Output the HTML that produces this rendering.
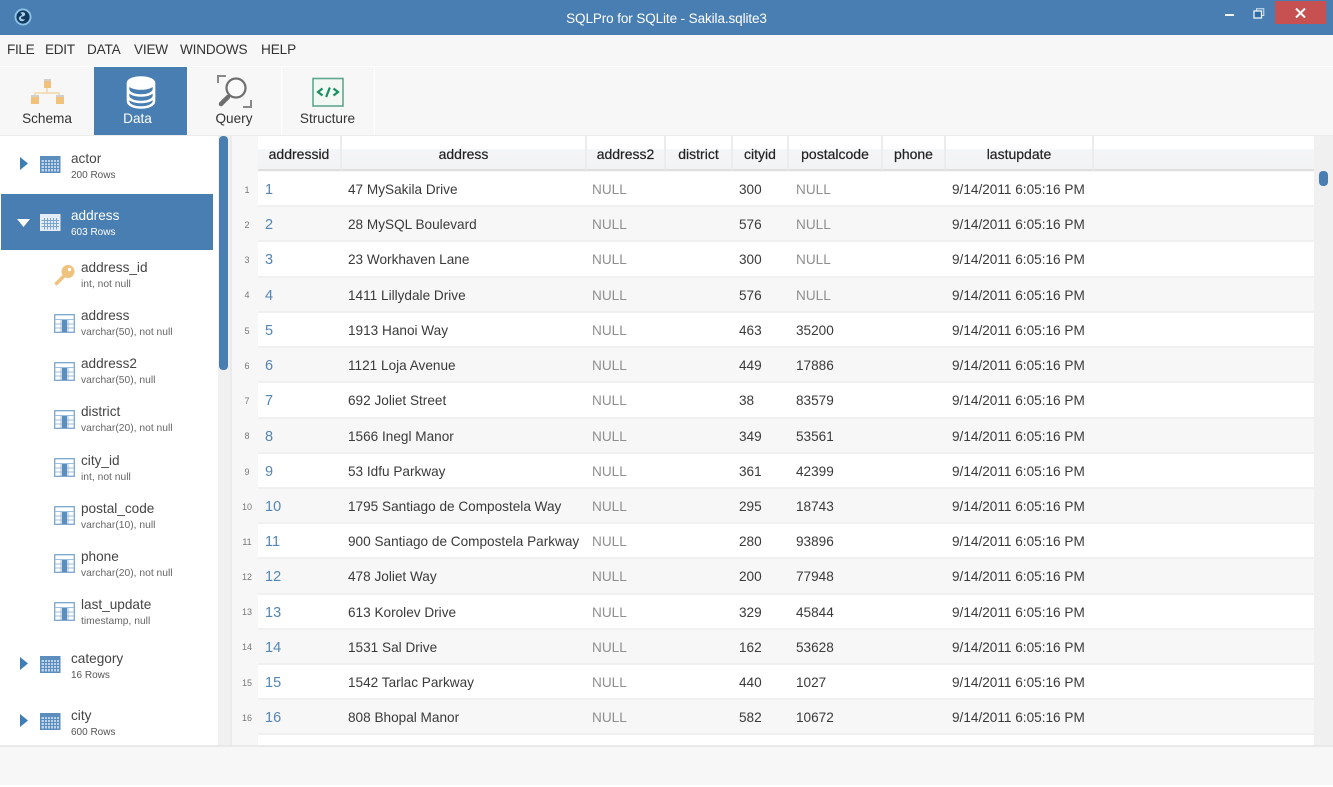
<!DOCTYPE html>
<html><head><meta charset="utf-8"><style>
html,body{margin:0;padding:0;width:1333px;height:787px;overflow:hidden;background:#f7f7f7;font-family:"Liberation Sans",sans-serif;color:#333}
div,span,svg{position:absolute;white-space:nowrap}
.row{left:258px;width:1056px;height:35px;box-sizing:border-box;border-bottom:2px solid #f0f0f0}
.row.o{background:#fff}.row.e{background:#f7f7f7}
.row span{top:9px;font-size:13.6px;line-height:18px;color:#3a3a3a}
.row .c1{left:7px;top:9px;color:#5286b8;font-size:14.5px}
.c2{left:90px}.row .c3{left:334px;color:#8f8f8f}.c5{left:481px}.c6{left:538px}.row .c6n{left:538px;color:#8f8f8f}.c8{left:694px}
.n{left:232px;width:30px;text-align:center;font-size:9px;line-height:12px;color:#777}
.h{top:136px;height:35px;background:linear-gradient(#fff 0,#fff 39%,#f4f5f7 41%,#f2f3f5 100%);border-right:2px solid #ececec;border-bottom:2px solid #dfdfdf;box-sizing:border-box;text-align:center;font-size:14px;line-height:37px;color:#222;-webkit-text-stroke:.2px #222}
.tb{left:40px;width:21px;height:17px}
.cn{left:71px;font-size:13.6px;line-height:16px;color:#444}
.cs{left:71px;font-size:10px;line-height:12px;color:#555}
.fn{left:81px;font-size:13.6px;line-height:16px;color:#444}
.fs{left:81px;font-size:10.3px;line-height:12px;color:#666}
.fi{left:54px;width:21px;height:19px}
.m{top:41px;font-size:13.6px;line-height:18px;color:#333}
.l{top:110px;font-size:13.6px;line-height:18px;color:#333;text-align:center}
</style></head><body>
<svg width="0" height="0" style="left:0;top:0"><defs>
<g id="tbl"><rect x="0" y="0" width="20.5" height="17" fill="#5b8dbd"/><rect x="1.5" y="4" width="17.5" height="11.5" fill="#bcd3e9"/><path d="M1.5 6.5H19M1.5 9.5H19M1.5 12.5H19M4.5 4V15.5M7.5 4V15.5M10.5 4V15.5M13.5 4V15.5M16.5 4V15.5" stroke="#5b8dbd" stroke-width="1" fill="none"/></g>
<g id="fld"><rect x="0.7" y="0.7" width="19.6" height="17.6" fill="#fff" stroke="#7ba6cf" stroke-width="1.3"/><path d="M1 5.5H20M1 10H8M13 10H20M1 14H8M13 14H20M7 5V18M14 5V18" stroke="#9dbedc" stroke-width="1" fill="none"/><rect x="8" y="6" width="5" height="12" fill="#5b8dbd"/></g>
</defs></svg>

<div style="left:0;top:0;width:1333px;height:35px;background:#497eb2"></div>
<svg style="left:14px;top:8px" width="18" height="18" viewBox="0 0 18 18"><circle cx="9" cy="9" r="8.5" fill="#8ec4e8"/><circle cx="9" cy="9" r="6.6" fill="#123a5e"/><path d="M6 5c3-2 6 0 5 2-1 2-4 1-4 3 0 1 2 2 4 1-1 3-5 3-6 0-1-2 2-3 3-4 0-1-1-2-2-2z" fill="#a9cfea"/></svg>
<div style="left:0;width:1333px;top:10px;text-align:center;font-size:13.5px;line-height:18px;color:#fff;letter-spacing:-.1px">SQLPro for SQLite - Sakila.sqlite3</div>
<div style="left:1225px;top:14px;width:9px;height:2px;background:#eef4fa"></div>
<svg style="left:1253px;top:8px" width="12" height="11" viewBox="0 0 12 11"><path d="M3.5 2.5V.7H10.8V7.5H8.5" fill="none" stroke="#d5e4f2" stroke-width="1"/><rect x="1" y="3" width="7.5" height="7" fill="#2f6ba3" stroke="#eef4fa" stroke-width="1.3"/></svg>
<div style="left:1275px;top:1px;width:51px;height:23px;background:#c75050"></div>
<svg style="left:1295px;top:8px" width="11" height="10" viewBox="0 0 11 10"><path d="M1 .5L10 9.5M10 .5L1 9.5" stroke="#fff" stroke-width="2"/></svg>

<div style="left:0;top:35px;width:1333px;height:31px;background:#f7f7f7;border-bottom:1px solid #fff"></div>
<div class="m" style="left:7px;letter-spacing:-.35px">FILE</div>
<div class="m" style="left:45px;letter-spacing:-.3px">EDIT</div>
<div class="m" style="left:87px;letter-spacing:-.2px">DATA</div>
<div class="m" style="left:134px;letter-spacing:-.2px">VIEW</div>
<div class="m" style="left:180px;letter-spacing:-.2px">WINDOWS</div>
<div class="m" style="left:261px;letter-spacing:-.1px">HELP</div>

<div style="left:0;top:67px;width:1333px;height:68px;background:#f7f7f7;border-bottom:2px solid #ececec"></div>
<div style="left:94px;top:67px;width:93px;height:68px;background:#497eb2"></div>
<div style="left:281px;top:67px;width:1px;height:68px;background:#fff"></div>
<div style="left:374px;top:67px;width:1px;height:68px;background:#fff"></div>
<div style="left:187px;top:67px;width:1px;height:68px;background:#fbfbfb"></div>

<svg style="left:30px;top:79px" width="34" height="28" viewBox="0 0 34 28"><path d="M17 8V14M5 20V14H29V20" fill="none" stroke="#f3d7a8" stroke-width="1.5"/><rect x="14" y="0" width="7" height="9" fill="#f0c27c"/><rect x="1" y="16" width="8" height="9" fill="#f0c27c"/><rect x="26" y="16" width="8" height="9" fill="#f0c27c"/><rect x="14" y="0" width="7" height="2" fill="#cfcfcf"/><rect x="1" y="16" width="8" height="2" fill="#cfcfcf"/><rect x="26" y="16" width="8" height="2" fill="#cfcfcf"/></svg>
<div class="l" style="left:0;width:94px">Schema</div>
<svg style="left:125px;top:76px" width="32" height="33" viewBox="0 0 32 33"><g fill="none" stroke="#fff" stroke-width="2.6"><ellipse cx="16" cy="7" rx="13" ry="5.5" fill="#fff"/><path d="M3 7V25C3 29 9 31.5 16 31.5S29 29 29 25V7"/><path d="M3 13C3 17 9 19.5 16 19.5S29 17 29 13"/><path d="M3 19.5C3 23.5 9 26 16 26S29 23.5 29 19.5"/></g></svg>
<div class="l" style="left:91px;width:93px;color:#fff">Data</div>
<svg style="left:215px;top:74px" width="38" height="35" viewBox="0 0 38 35"><g fill="none" stroke="#888" stroke-width="2"><path d="M3 9V2H11M28 33H36V26"/></g><circle cx="21" cy="14" r="9.5" fill="#fff" fill-opacity=".4" stroke="#6e6e6e" stroke-width="2.2"/><path d="M13 23L6 30" stroke="#6e6e6e" stroke-width="4.5" stroke-linecap="round"/></svg>
<div class="l" style="left:187px;width:94px">Query</div>
<svg style="left:312px;top:77px" width="33" height="30" viewBox="0 0 33 30"><rect x="1" y="1.5" width="30" height="27.5" fill="#f3f8f5" stroke="#5fa88f" stroke-width="1.6"/><path d="M10.5 11.5L6 15L10.5 18.5M21.5 11.5L26 15L21.5 18.5M17.8 10.5L14.2 20" fill="none" stroke="#17905f" stroke-width="2.2"/></svg>
<div class="l" style="left:281px;width:93px">Structure</div>

<div style="left:0;top:136px;width:218px;height:609px;background:#fff"></div>
<div style="left:218px;top:136px;width:14px;height:609px;background:#f0f0f0"></div>
<div style="left:219px;top:136px;width:9px;height:234px;background:#497eb2;border-radius:4px"></div>
<div style="left:230px;top:136px;width:2px;height:609px;background:#ebebeb"></div>

<div style="left:1px;top:194px;width:212px;height:56px;background:#497eb2"></div>

<svg style="left:20px;top:157px" width="8" height="13"><path d="M0 0L8 6.5L0 13z" fill="#3f7db5"/></svg>
<svg class="tb" style="top:156px" viewBox="0 0 21 17"><use href="#tbl"/></svg>
<div class="cn" style="top:151px">actor</div><div class="cs" style="top:170px">200 Rows</div>

<svg style="left:17px;top:219px" width="13" height="8"><path d="M0 0H13L6.5 8z" fill="#fff"/></svg>
<svg style="left:40px;top:214px" width="21" height="17" viewBox="0 0 21 17"><rect width="20.5" height="17" fill="#e4edf6"/><path d="M1.5 6.5H19M1.5 9.5H19M1.5 12.5H19M4.5 4V15.5M7.5 4V15.5M10.5 4V15.5M13.5 4V15.5M16.5 4V15.5" stroke="#7ba6cf" stroke-width="1"/></svg>
<div class="cn" style="top:208px;color:#fff">address</div><div class="cs" style="top:227px;color:#fff">603 Rows</div>

<svg style="left:54px;top:264px" width="21" height="22" viewBox="0 0 21 22"><circle cx="14" cy="7.5" r="6.5" fill="#efc27e"/><circle cx="15.5" cy="5.5" r="1.7" fill="#fff"/><path d="M10 12L2.5 19.5" stroke="#efc27e" stroke-width="3.5" stroke-linecap="round"/></svg>
<div class="fn" style="top:260px">address_id</div><div class="fs" style="top:279px">int, not null</div>

<svg class="fi" style="top:314px" viewBox="0 0 21 19"><use href="#fld"/></svg>
<div class="fn" style="top:308px">address</div><div class="fs" style="top:327px">varchar(50), not null</div>
<svg class="fi" style="top:362px" viewBox="0 0 21 19"><use href="#fld"/></svg>
<div class="fn" style="top:356px">address2</div><div class="fs" style="top:375px">varchar(50), null</div>
<svg class="fi" style="top:410px" viewBox="0 0 21 19"><use href="#fld"/></svg>
<div class="fn" style="top:404px">district</div><div class="fs" style="top:423px">varchar(20), not null</div>
<svg class="fi" style="top:458px" viewBox="0 0 21 19"><use href="#fld"/></svg>
<div class="fn" style="top:453px">city_id</div><div class="fs" style="top:472px">int, not null</div>
<svg class="fi" style="top:506px" viewBox="0 0 21 19"><use href="#fld"/></svg>
<div class="fn" style="top:501px">postal_code</div><div class="fs" style="top:520px">varchar(10), null</div>
<svg class="fi" style="top:554px" viewBox="0 0 21 19"><use href="#fld"/></svg>
<div class="fn" style="top:549px">phone</div><div class="fs" style="top:568px">varchar(20), not null</div>
<svg class="fi" style="top:602px" viewBox="0 0 21 19"><use href="#fld"/></svg>
<div class="fn" style="top:597px">last_update</div><div class="fs" style="top:616px">timestamp, null</div>

<svg style="left:20px;top:657px" width="8" height="13"><path d="M0 0L8 6.5L0 13z" fill="#3f7db5"/></svg>
<svg class="tb" style="top:656px" viewBox="0 0 21 17"><use href="#tbl"/></svg>
<div class="cn" style="top:651px">category</div><div class="cs" style="top:670px">16 Rows</div>
<svg style="left:20px;top:714px" width="8" height="13"><path d="M0 0L8 6.5L0 13z" fill="#3f7db5"/></svg>
<svg class="tb" style="top:713px" viewBox="0 0 21 17"><use href="#tbl"/></svg>
<div class="cn" style="top:708px">city</div><div class="cs" style="top:727px">600 Rows</div>

<div style="left:232px;top:136px;width:1101px;height:609px;background:#f7f7f7"></div>
<div style="left:258px;top:172px;width:1056px;height:573px;background:#fff"></div>

<div class="h" style="left:258px;width:84px">addressid</div>
<div class="h" style="left:342px;width:245px">address</div>
<div class="h" style="left:587px;width:79px">address2</div>
<div class="h" style="left:666px;width:67px">district</div>
<div class="h" style="left:733px;width:56px">cityid</div>
<div class="h" style="left:789px;width:94px">postalcode</div>
<div class="h" style="left:883px;width:63px">phone</div>
<div class="h" style="left:946px;width:148px">lastupdate</div>
<div class="h" style="left:1094px;width:220px;border-right:0"></div>

<div style="left:1314px;top:136px;width:19px;height:609px;background:#f0f0f0"></div>
<div style="left:1319px;top:171px;width:9px;height:15px;background:#497eb2;border-radius:4px"></div>

<div class="row o" style="top:172px"><span class="c1">1</span><span class="c2">47 MySakila Drive</span><span class="c3">NULL</span><span class="c5">300</span><span class="c6n">NULL</span><span class="c8">9/14/2011 6:05:16 PM</span></div>
<div class="row e" style="top:207px"><span class="c1">2</span><span class="c2">28 MySQL Boulevard</span><span class="c3">NULL</span><span class="c5">576</span><span class="c6n">NULL</span><span class="c8">9/14/2011 6:05:16 PM</span></div>
<div class="row o" style="top:242px;height:36px"><span class="c1">3</span><span class="c2">23 Workhaven Lane</span><span class="c3">NULL</span><span class="c5">300</span><span class="c6n">NULL</span><span class="c8">9/14/2011 6:05:16 PM</span></div>
<div class="row e" style="top:278px"><span class="c1">4</span><span class="c2">1411 Lillydale Drive</span><span class="c3">NULL</span><span class="c5">576</span><span class="c6n">NULL</span><span class="c8">9/14/2011 6:05:16 PM</span></div>
<div class="row o" style="top:313px"><span class="c1">5</span><span class="c2">1913 Hanoi Way</span><span class="c3">NULL</span><span class="c5">463</span><span class="c6">35200</span><span class="c8">9/14/2011 6:05:16 PM</span></div>
<div class="row e" style="top:348px"><span class="c1">6</span><span class="c2">1121 Loja Avenue</span><span class="c3">NULL</span><span class="c5">449</span><span class="c6">17886</span><span class="c8">9/14/2011 6:05:16 PM</span></div>
<div class="row o" style="top:383px;height:36px"><span class="c1">7</span><span class="c2">692 Joliet Street</span><span class="c3">NULL</span><span class="c5">38</span><span class="c6">83579</span><span class="c8">9/14/2011 6:05:16 PM</span></div>
<div class="row e" style="top:419px"><span class="c1">8</span><span class="c2">1566 Inegl Manor</span><span class="c3">NULL</span><span class="c5">349</span><span class="c6">53561</span><span class="c8">9/14/2011 6:05:16 PM</span></div>
<div class="row o" style="top:454px"><span class="c1">9</span><span class="c2">53 Idfu Parkway</span><span class="c3">NULL</span><span class="c5">361</span><span class="c6">42399</span><span class="c8">9/14/2011 6:05:16 PM</span></div>
<div class="row e" style="top:489px"><span class="c1">10</span><span class="c2">1795 Santiago de Compostela Way</span><span class="c3">NULL</span><span class="c5">295</span><span class="c6">18743</span><span class="c8">9/14/2011 6:05:16 PM</span></div>
<div class="row o" style="top:524px"><span class="c1">11</span><span class="c2">900 Santiago de Compostela Parkway</span><span class="c3">NULL</span><span class="c5">280</span><span class="c6">93896</span><span class="c8">9/14/2011 6:05:16 PM</span></div>
<div class="row e" style="top:559px;height:36px"><span class="c1">12</span><span class="c2">478 Joliet Way</span><span class="c3">NULL</span><span class="c5">200</span><span class="c6">77948</span><span class="c8">9/14/2011 6:05:16 PM</span></div>
<div class="row o" style="top:595px"><span class="c1">13</span><span class="c2">613 Korolev Drive</span><span class="c3">NULL</span><span class="c5">329</span><span class="c6">45844</span><span class="c8">9/14/2011 6:05:16 PM</span></div>
<div class="row e" style="top:630px"><span class="c1">14</span><span class="c2">1531 Sal Drive</span><span class="c3">NULL</span><span class="c5">162</span><span class="c6">53628</span><span class="c8">9/14/2011 6:05:16 PM</span></div>
<div class="row o" style="top:665px"><span class="c1">15</span><span class="c2">1542 Tarlac Parkway</span><span class="c3">NULL</span><span class="c5">440</span><span class="c6">1027</span><span class="c8">9/14/2011 6:05:16 PM</span></div>
<div class="row e" style="top:700px"><span class="c1">16</span><span class="c2">808 Bhopal Manor</span><span class="c3">NULL</span><span class="c5">582</span><span class="c6">10672</span><span class="c8">9/14/2011 6:05:16 PM</span></div>

<div class="n" style="top:184px">1</div><div class="n" style="top:219px">2</div><div class="n" style="top:254px">3</div><div class="n" style="top:289px">4</div><div class="n" style="top:325px">5</div><div class="n" style="top:360px">6</div><div class="n" style="top:395px">7</div><div class="n" style="top:430px">8</div><div class="n" style="top:466px">9</div><div class="n" style="top:501px">10</div><div class="n" style="top:536px">11</div><div class="n" style="top:571px">12</div><div class="n" style="top:606px">13</div><div class="n" style="top:641px">14</div><div class="n" style="top:677px">15</div><div class="n" style="top:712px">16</div>

<div style="left:0;top:745px;width:1333px;height:2px;background:#e9e9e9"></div>
<div style="left:0;top:747px;width:1333px;height:38px;background:#f7f7f7"></div>
<div style="left:0;top:785px;width:1333px;height:2px;background:#fff"></div>
</body></html>
